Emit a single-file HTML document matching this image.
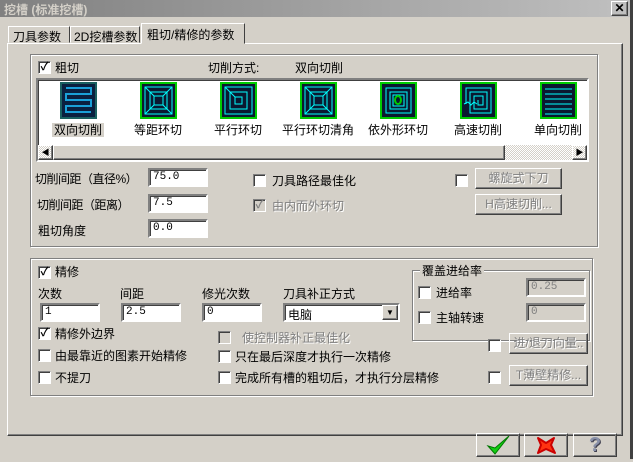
<!DOCTYPE html><html><head><meta charset="utf-8"><style>
*{box-sizing:border-box}
body{margin:0;width:633px;height:459px;background:#d4d0c8;font:12px "Liberation Sans","Noto Sans CJK SC","WenQuanYi Zen Hei",sans-serif;position:relative;overflow:hidden;color:#000}
.a{position:absolute;white-space:nowrap}
.title{left:0;top:0;width:633px;height:17px;background:linear-gradient(90deg,#808080,#c0c0c0);color:#d4d0c8;font-weight:bold;padding:1px 4px}
.grp{position:absolute;border:1px solid #808080;box-shadow:1px 1px 0 #fff inset,1px 1px 0 #fff}
.in{position:absolute;height:19px;background:#fff;border:2px solid;border-color:#808080 #fff #fff #808080;box-shadow:inset 1px 1px 0 #404040;padding:1px 3px;font-family:"Liberation Mono",monospace;font-size:11px}
.in.d{background:#d4d0c8;color:#808080}
.cb{position:absolute;width:13px;height:13px;background:#fff;border:1px solid;border-color:#808080 #fff #fff #808080;box-shadow:inset 1px 1px 0 #404040;font-size:11px;line-height:10px;text-align:center;font-weight:bold}
.cb.g{background:#d4d0c8;color:#808080}
.btn{position:absolute;border:1px solid;border-color:#fff #404040 #404040 #fff;box-shadow:inset -1px -1px 0 #808080;text-align:center;color:#808080;text-shadow:1px 1px 0 #fff;line-height:19px}
.ic{position:absolute;top:82px;width:37px;height:37px;background:#0a1830;border:2px solid #0c0;}
.lb{position:absolute;top:121px;width:80px;text-align:center}
</style></head><body>
<div class="a title">挖槽 (标准挖槽)</div>
<div class="btn" style="left:611px;top:1px;width:17px;height:15px;color:#000;text-shadow:none;line-height:13px;font-weight:bold">✕</div>
<div class="a" style="left:630px;top:0;width:3px;height:459px;background:#404040"></div>
<div class="a" style="left:8px;top:26px;width:62px;height:17px;border:1px solid;border-color:#fff #404040 transparent #fff;padding:1px 4px">刀具参数</div>
<div class="a" style="left:70px;top:26px;width:70px;height:17px;border:1px solid;border-color:#fff #404040 transparent #fff;padding:1px 3px">2D挖槽参数</div>
<div class="a" style="left:141px;top:23px;width:104px;height:21px;border:1px solid;border-color:#fff #404040 transparent #fff;background:#d4d0c8;padding:2px 5px;z-index:2">粗切/精修的参数</div>
<div class="a" style="left:7px;top:43px;width:616px;height:393px;border:1px solid;border-color:#fff #404040 #404040 #fff;box-shadow:inset -1px -1px 0 #808080"></div>
<div class="grp" style="left:30px;top:54px;width:568px;height:193px"></div>
<div class="cb" style="left:38px;top:61px">✓</div><div class="a" style="left:55px;top:59px">粗切</div>
<div class="a" style="left:208px;top:59px">切削方式:</div><div class="a" style="left:295px;top:59px">双向切削</div>
<div class="a" style="left:36px;top:78px;width:553px;height:84px;background:#fff;border:2px solid;border-color:#808080 #fff #fff #808080;box-shadow:inset 1px 1px 0 #404040"></div>
<div class="ic" style="left:60px;border-color:#1a6060;background:#0a2040"><svg width="33" height="33"><path d="M4 4H29V10H4V16H29V22H4V28H29" fill="none" stroke="#1aa0d8" stroke-width="2"/></svg></div>
<div class="ic" style="left:140px"><svg width="33" height="33" fill="none" stroke="#0ff"><rect x="3" y="3" width="27" height="27"/><rect x="8" y="8" width="17" height="17"/><rect x="12" y="12" width="9" height="9"/><path d="M3 3L12 12M30 3L21 12M3 30L12 21M30 30L21 21"/></svg></div>
<div class="ic" style="left:220px"><svg width="33" height="33" fill="none" stroke="#0ff"><rect x="3" y="3" width="27" height="27"/><rect x="8" y="8" width="17" height="17"/><rect x="13" y="13" width="7" height="7"/><path d="M3 3L13 13"/></svg></div>
<div class="ic" style="left:300px"><svg width="33" height="33" fill="none" stroke="#0ff"><rect x="3" y="3" width="27" height="27"/><rect x="8" y="8" width="17" height="17"/><rect x="12" y="12" width="9" height="9"/><path d="M3 3L12 12M30 3L21 12M3 30L12 21M30 30L21 21"/></svg></div>
<div class="ic" style="left:380px"><svg width="33" height="33" fill="none" stroke="#0ff"><path d="M4 4H29V29H4ZM8 8H25V25H8ZM11 11H22V22H11Z"/><ellipse cx="16" cy="16" rx="3" ry="4" stroke="#0c0" stroke-width="2"/></svg></div>
<div class="ic" style="left:460px"><svg width="33" height="33" fill="none" stroke="#0ff"><path d="M4 20V4H29V29H8V8H25V25H12V12H21V21H16V16"/><path d="M2 20L6 18L9 21L12 18L15 20" stroke="#0ff"/></svg></div>
<div class="ic" style="left:540px"><svg width="33" height="33"><path d="M3 5H30M3 10H30M3 15H30M3 20H30M3 25H30M3 30H30" stroke="#0ff"/></svg></div>
<div class="lb" style="left:38px"><span style="background:#d4d0c8;padding:0 2px">双向切削</span></div>
<div class="lb" style="left:118px">等距环切</div><div class="lb" style="left:198px">平行环切</div>
<div class="lb" style="left:278px">平行环切清角</div><div class="lb" style="left:358px">依外形环切</div>
<div class="lb" style="left:438px">高速切削</div><div class="lb" style="left:518px">单向切削</div>
<div class="a" style="left:38px;top:145px;width:549px;height:15px;background:repeating-conic-gradient(#fff 0 25%,#d4d0c8 0 50%) 0 0/2px 2px"></div>
<div class="btn" style="left:38px;top:145px;width:15px;height:15px;color:#000;text-shadow:none;line-height:13px;font-size:8px">◀</div>
<div class="btn" style="left:53px;top:145px;width:452px;height:15px;background:#d4d0c8"></div>
<div class="btn" style="left:572px;top:145px;width:15px;height:15px;color:#000;text-shadow:none;line-height:13px;font-size:8px">▶</div>
<div class="a" style="left:35px;top:170px;letter-spacing:-0.5px">切削间距（直径%）</div><div class="in" style="left:148px;top:168px;width:60px">75.0</div>
<div class="a" style="left:37px;top:196px;letter-spacing:-0.5px">切削间距（距离）</div><div class="in" style="left:148px;top:194px;width:60px">7.5</div>
<div class="a" style="left:38px;top:222px">粗切角度</div><div class="in" style="left:148px;top:219px;width:60px">0.0</div>
<div class="cb" style="left:253px;top:174px"></div><div class="a" style="left:272px;top:172px">刀具路径最佳化</div>
<div class="cb g" style="left:253px;top:199px">✓</div><div class="a" style="left:272px;top:197px;color:#808080;text-shadow:1px 1px 0 #fff">由内而外环切</div>
<div class="cb" style="left:455px;top:174px"></div>
<div class="btn" style="left:475px;top:168px;width:87px;height:21px">螺旋式下刀</div>
<div class="btn" style="left:475px;top:194px;width:87px;height:21px">H高速切削...</div>
<div class="grp" style="left:30px;top:258px;width:563px;height:138px"></div>
<div class="cb" style="left:38px;top:266px">✓</div><div class="a" style="left:55px;top:263px">精修</div>
<div class="a" style="left:38px;top:285px">次数</div><div class="a" style="left:120px;top:285px">间距</div>
<div class="a" style="left:202px;top:285px">修光次数</div><div class="a" style="left:283px;top:285px">刀具补正方式</div>
<div class="in" style="left:40px;top:303px;width:60px">1</div><div class="in" style="left:121px;top:303px;width:60px">2.5</div>
<div class="in" style="left:202px;top:303px;width:60px">0</div>
<div class="in" style="left:283px;top:303px;width:117px;font-family:'Liberation Sans','Noto Sans CJK SC',sans-serif;font-size:12px">电脑</div>
<div class="btn" style="left:382px;top:305px;width:16px;height:15px;color:#000;text-shadow:none;line-height:13px;font-size:8px;background:#d4d0c8">▼</div>
<div class="grp" style="left:412px;top:270px;width:178px;height:71px"></div>
<div class="a" style="left:420px;top:262px;background:#d4d0c8;padding:0 2px">覆盖进给率</div>
<div class="cb" style="left:418px;top:286px"></div><div class="a" style="left:436px;top:284px">进给率</div>
<div class="cb" style="left:418px;top:311px"></div><div class="a" style="left:436px;top:309px">主轴转速</div>
<div class="in d" style="left:526px;top:278px;width:60px">0.25</div>
<div class="in d" style="left:526px;top:303px;width:60px">0</div>
<div class="cb" style="left:38px;top:327px">✓</div><div class="a" style="left:55px;top:325px">精修外边界</div>
<div class="cb" style="left:38px;top:349px"></div><div class="a" style="left:55px;top:347px">由最靠近的图素开始精修</div>
<div class="cb" style="left:38px;top:371px"></div><div class="a" style="left:55px;top:369px">不提刀</div>
<div class="cb g" style="left:218px;top:331px;background:#d4d0c8"></div><div class="a" style="left:242px;top:329px;color:#808080;text-shadow:1px 1px 0 #fff">使控制器补正最佳化</div>
<div class="cb" style="left:218px;top:350px"></div><div class="a" style="left:235px;top:348px">只在最后深度才执行一次精修</div>
<div class="cb" style="left:218px;top:371px"></div><div class="a" style="left:235px;top:369px">完成所有槽的粗切后，才执行分层精修</div>
<div class="cb" style="left:488px;top:339px"></div>
<div class="btn" style="left:509px;top:333px;width:79px;height:21px">进/退刀向量..</div>
<div class="cb" style="left:488px;top:371px"></div>
<div class="btn" style="left:509px;top:365px;width:79px;height:21px">T薄壁精修...</div>
<div class="btn" style="left:476px;top:433px;width:44px;height:24px"><svg width="30" height="22"><path d="M5 12L12 20L26 2L12 14Z" fill="#1c1" stroke="#070"/></svg></div>
<div class="btn" style="left:524px;top:433px;width:44px;height:24px"><svg width="30" height="22"><path d="M7 4L15 9L23 4L20 11L24 19L15 15L7 19L10 11Z" fill="#f31" stroke="#c00" stroke-width="2" stroke-linejoin="round"/></svg></div>
<div class="btn" style="left:573px;top:433px;width:44px;height:24px;color:#8890a8;font-weight:bold;font-size:20px;line-height:22px;text-shadow:1px 1px 0 #404050">?</div>
</body></html>
